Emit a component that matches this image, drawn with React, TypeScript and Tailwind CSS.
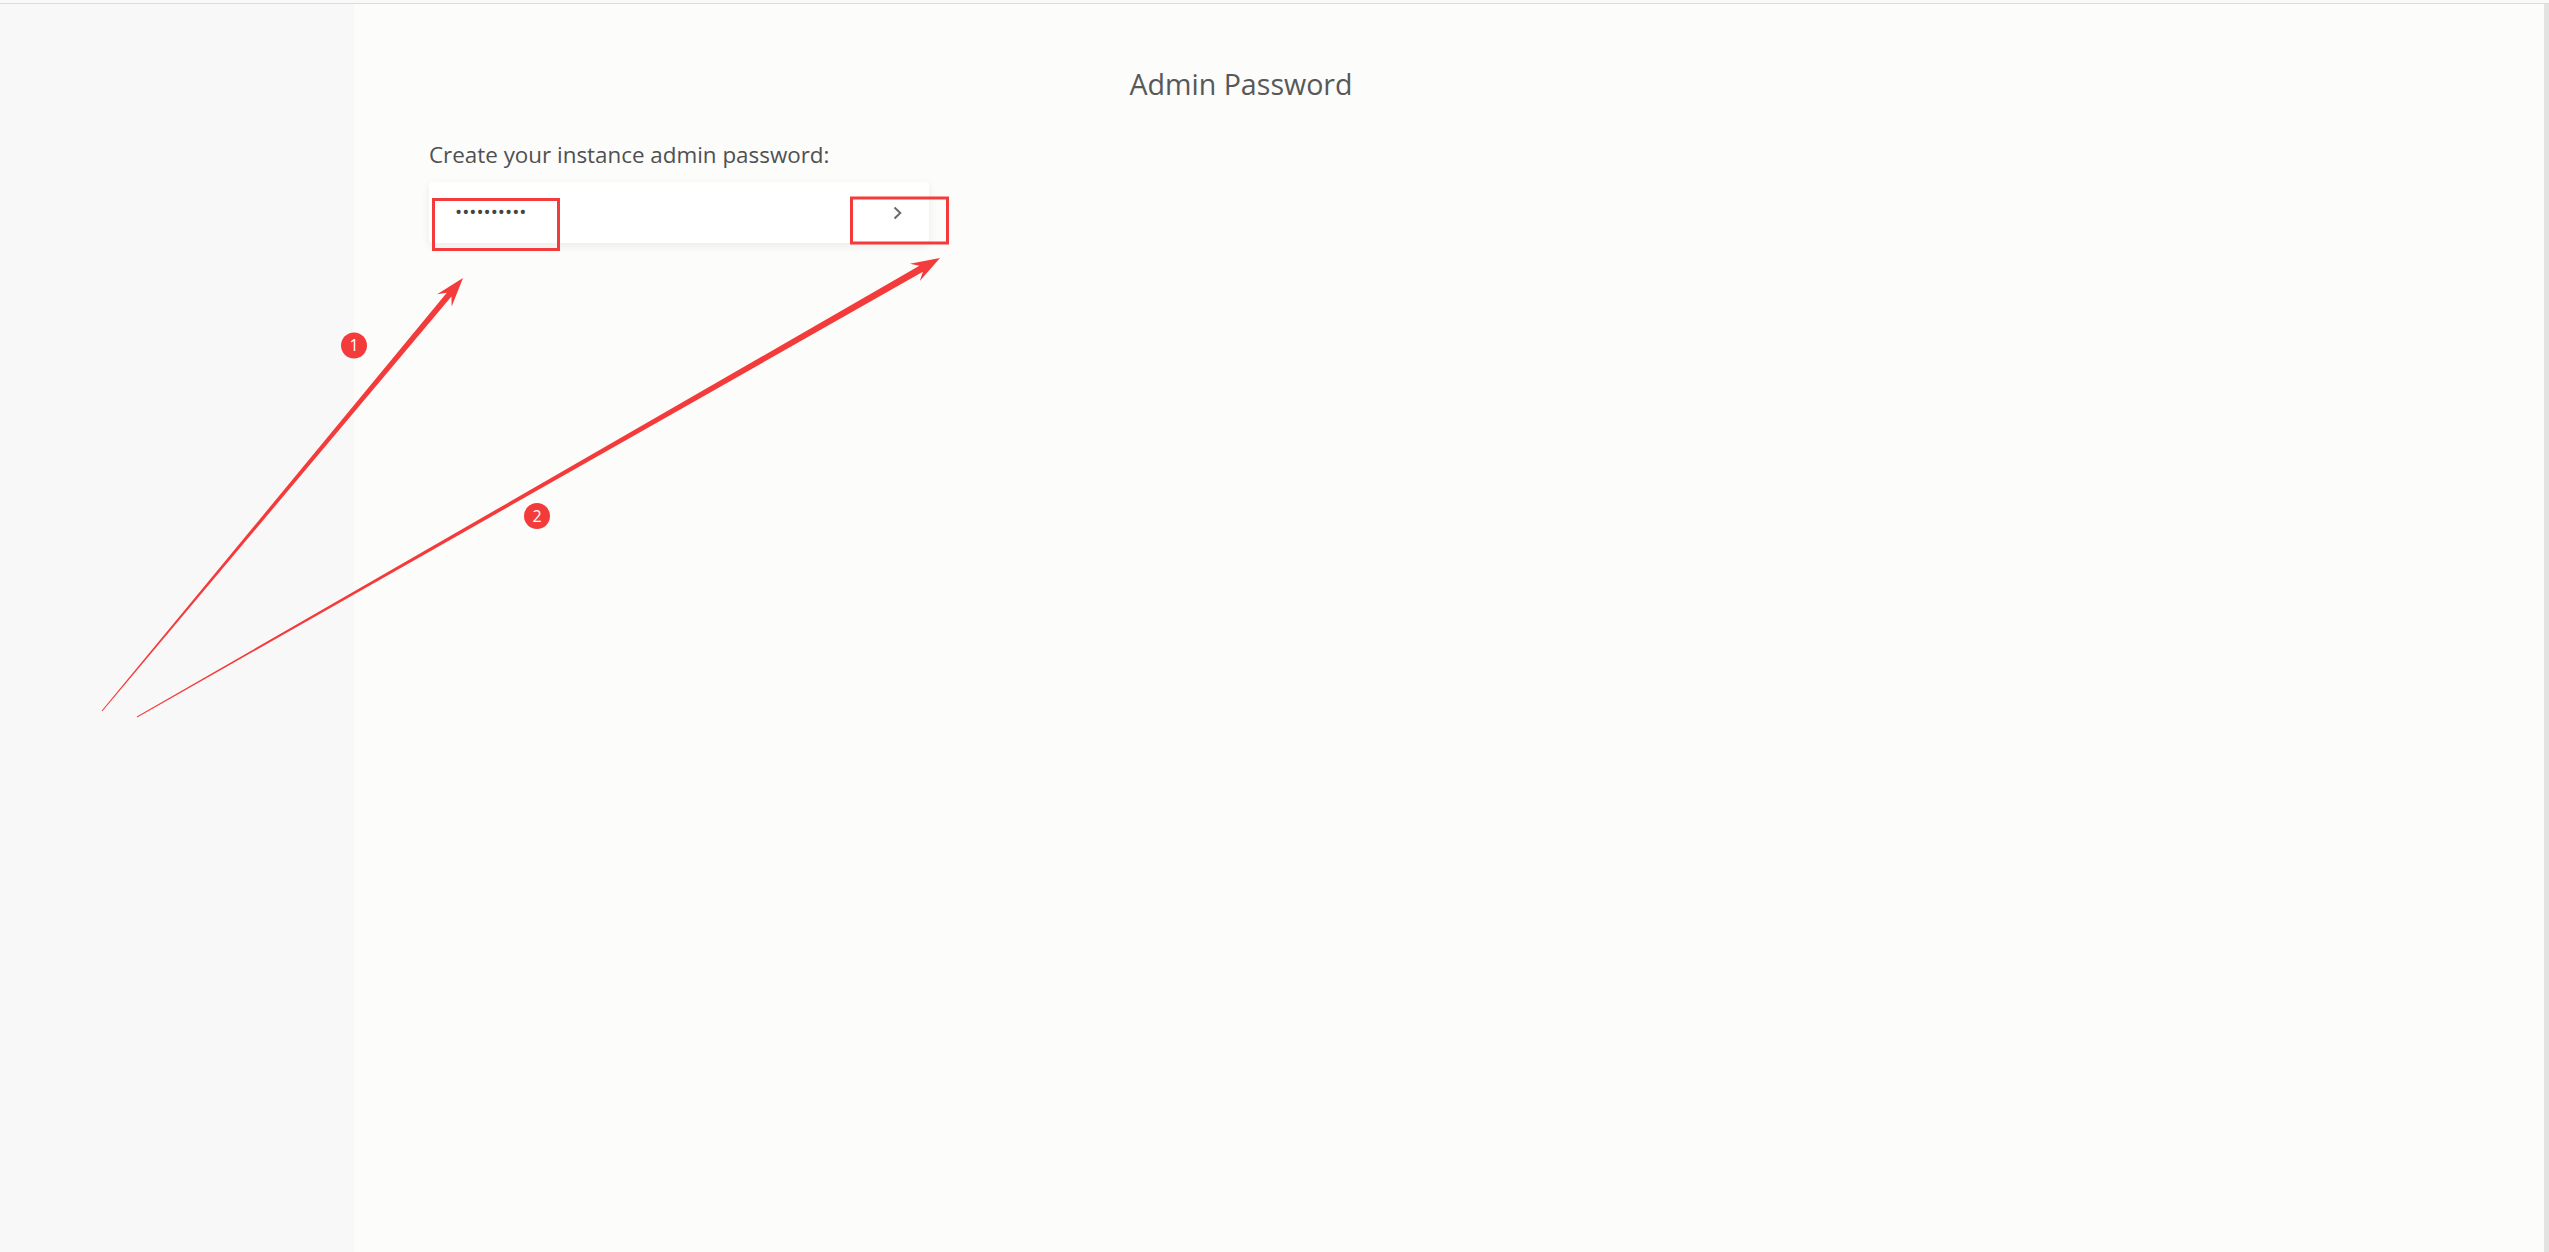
import React, { useState } from 'react';

type Pt = [number, number];

// tapered screenshot-style arrow, thin at the tail and fat near the head
const arrowPoints = (tail: Pt, tip: Pt, tailW: number, neckW: number, headLen: number, headW: number) => {
  const dx = tip[0] - tail[0];
  const dy = tip[1] - tail[1];
  const len = Math.hypot(dx, dy);
  const ux = dx / len;
  const uy = dy / len;
  const nx = -uy;
  const ny = ux;
  const at = (d: number, off: number): Pt => [tail[0] + ux * d + nx * off, tail[1] + uy * d + ny * off];
  const neck = len - headLen * 0.75;
  const barb = len - headLen;
  const pts: Pt[] = [
    at(0, tailW / 2),
    at(neck, neckW / 2),
    at(barb, headW / 2),
    tip,
    at(barb, -headW / 2),
    at(neck, -neckW / 2),
    at(0, -tailW / 2),
  ];
  return pts.map((p) => `${p[0].toFixed(1)},${p[1].toFixed(1)}`).join(' ');
};

const Annotations = () => {
  const red = '#f43b3b';
  return (
    <svg className="absolute inset-0 pointer-events-none" width="2549" height="1252">
      <rect x="433.5" y="199.5" width="125" height="50" fill="none" stroke={red} strokeWidth="3" />
      <rect x="851.5" y="198" width="96" height="45" fill="none" stroke={red} strokeWidth="3" />

      <polygon points={arrowPoints([102, 711], [463, 278], 1, 6, 29, 19)} fill={red} />
      <polygon points={arrowPoints([137, 717], [940, 258], 1, 7, 29, 20)} fill={red} />

      <circle cx="354" cy="345.5" r="13" fill={red} />
      <text x="354" y="351" textAnchor="middle" fill="#fff" fontSize="16" fontFamily="'Open Sans', sans-serif">1</text>
      <circle cx="537" cy="516" r="13" fill={red} />
      <text x="537" y="521.5" textAnchor="middle" fill="#fff" fontSize="16" fontFamily="'Open Sans', sans-serif">2</text>
    </svg>
  );
};

const App = () => {
  const [password, setPassword] = useState('adminpass1');

  return (
    <div className="relative h-screen w-full overflow-hidden bg-[#f9f9f9] pt-[3px] font-['Open_Sans',sans-serif]">
      <div className="flex h-full border-t border-[#dcdcdc]">
        <aside className="w-[354px] shrink-0 bg-[#f8f8f8]" />

        <main className="flex-1 bg-[#fcfcfa] pt-[62px] pl-[75px]">
          <div className="w-[1624px]">
            <h1 className="text-center text-[28.6px] leading-[36px] font-normal text-[#58585a]">Admin Password</h1>

            <p className="mt-[39px] text-[22.4px] leading-[28px] text-[#505052]">Create your instance admin password:</p>

            <div className="mt-[13px] flex h-[61px] w-[500px] items-center justify-between rounded-[4px] bg-white pl-[26px] pr-[27px] shadow-[0_3px_10px_rgba(0,0,0,0.07)]">
              <input
                type="password"
                value={password}
                onChange={(e) => setPassword(e.target.value)}
                className="w-[300px] bg-transparent text-[19px] tracking-[0px] text-[#444] outline-none"
              />
              <button className="flex h-[14px] w-[9px] items-center justify-center">
                <svg width="9" height="14" viewBox="0 0 9 14">
                  <polyline points="1.5,1.5 7.3,7 1.5,12.5" fill="none" stroke="#6b6b6b" strokeWidth="2" />
                </svg>
              </button>
            </div>
          </div>
        </main>

        <div className="w-[5px] shrink-0 bg-[#e3e3e1]" />
      </div>

      <Annotations />
    </div>
  );
};

export default App;
